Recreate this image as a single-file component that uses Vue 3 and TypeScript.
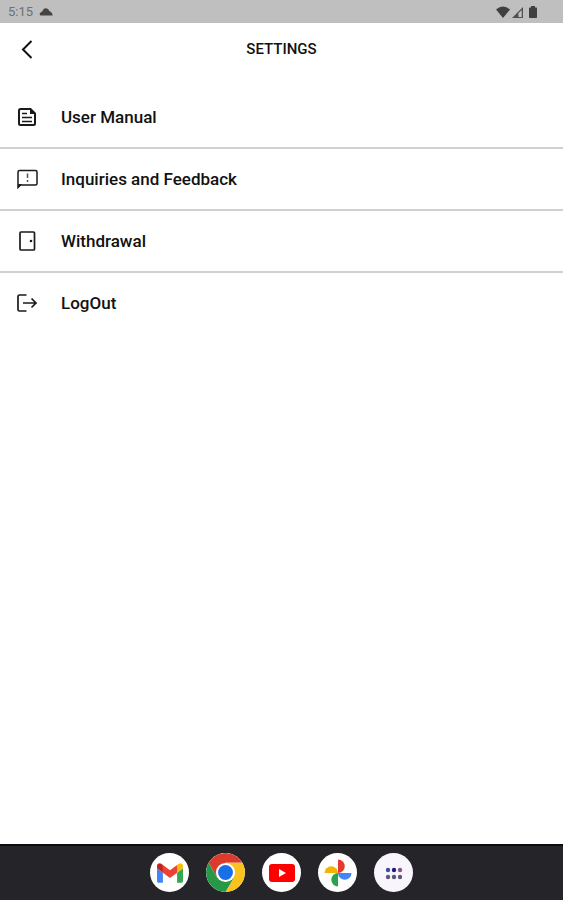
<script setup lang="ts">
interface MenuItem {
  id: string
  label: string
}

const items: MenuItem[] = [
  { id: 'manual', label: 'User Manual' },
  { id: 'feedback', label: 'Inquiries and Feedback' },
  { id: 'withdrawal', label: 'Withdrawal' },
  { id: 'logout', label: 'LogOut' },
]

const dots = [
  { x: 13, y: 16, color: '#3f4f9a' },
  { x: 19, y: 16, color: '#1c1c8c' },
  { x: 25, y: 16, color: '#8c5580' },
  { x: 13, y: 23, color: '#5f5878' },
  { x: 19, y: 23, color: '#5a5578' },
  { x: 25, y: 23, color: '#5f5878' },
]
</script>

<template>
  <div class="screen">
    <div class="status">
      <span class="time">5:15</span>
      <svg class="cloud" viewBox="0 0 14 8" width="14" height="8" aria-hidden="true">
        <path d="M1.500 7.500Q.2 7 .8 5.500 1.500 4 3.200 3.500C4.200 1.200 5.300.3 6.800.3c1.600 0 2.700 1 3.500 2.700C12.200 3.800 13.600 5.200 13.600 7.500z" fill="#444" />
      </svg>
      <svg class="signals" viewBox="0 0 44 14" width="44" height="14" aria-hidden="true">
        <path d="M0 4.500Q7-1.500 14 4.500L7 13z" fill="#404040" />
        <path d="M16 13 27 2v11z" fill="#505050" />
        <path d="M22.500 12V8.200L25.700 5v7z" fill="#c4c4c4" />
        <path d="M35 1h4v1.500h1.500q.5 0 .5.700v9q0 .8-.8.800h-6.400q-.8 0-.8-.8v-9q0-.7.500-.7H35z" fill="#404040" />
      </svg>
    </div>

    <header class="header">
      <button class="back" type="button" aria-label="Back">
        <svg viewBox="0 0 24 24" width="24" height="24">
          <path d="M16.500 4 8 12.500l8.500 8.500" fill="none" stroke="#111" stroke-width="2" />
        </svg>
      </button>
      <h1 class="title">SETTINGS</h1>
    </header>

    <main class="menu">
      <button v-for="item in items" :key="item.id" class="row" type="button">
        <svg class="icon" viewBox="0 0 24 24" width="24" height="24" fill="none" stroke="#1a1a1a" aria-hidden="true">
          <g v-if="item.id === 'manual'" stroke-width="2">
            <path d="M5.500 4h10L20 8.500v10q0 1.500-1.500 1.500h-13Q4 20 4 18.500v-13Q4 4 5.500 4z" />
            <path d="M15 4v5h5z" fill="#1a1a1a" stroke="none" />
            <path d="M7 8.500h5M7 12.500h10M7 16.500h10" stroke-width="1.500" />
          </g>
          <g v-else-if="item.id === 'feedback'" stroke-width="1.500">
            <path d="M3 20.500V5q0-1.500 1.500-1.500h16Q22 3.500 22 5v11.500q0 1.500-1.500 1.500h-15z" />
            <path d="M3 21v-4h4z" fill="#1a1a1a" stroke="none" />
            <path d="M12.500 6.500v4.500M12.500 13v2" stroke="#555" />
          </g>
          <g v-else-if="item.id === 'withdrawal'" stroke-width="1.700">
            <rect x="5" y="3" width="14.500" height="18" rx="1" />
            <circle cx="16" cy="12" r="1.300" fill="#1a1a1a" stroke="none" />
          </g>
          <g v-else stroke-width="1.700">
            <path d="M11.500 4H4.500Q3 4 3 5.500v13Q3 20 4.500 20h7" />
            <path d="M8 12h13M16.500 7.500 21 12l-4.500 4.500" />
          </g>
        </svg>
        <span class="label">{{ item.label }}</span>
      </button>
    </main>

    <nav class="dock">
      <button class="app" type="button" aria-label="Gmail">
        <svg viewBox="52 42 88 66" width="26" height="20">
          <path fill="#4285f4" d="M58 108h14V74L52 59v43c0 3.320 2.690 6 6 6" />
          <path fill="#34a853" d="M120 108h14c3.320 0 6-2.690 6-6V59l-20 15" />
          <path fill="#fbbc04" d="M120 48v26l20-15v-8c0-7.420-8.470-11.650-14.400-7.200" />
          <path fill="#ea4335" d="M72 74V48l24 18 24-18v26L96 92" />
          <path fill="#c5221f" d="M52 51v8l20 15V48l-5.600-4.200c-5.940-4.450-14.400-.22-14.400 7.200" />
        </svg>
      </button>
      <button class="app" type="button" aria-label="Chrome">
        <svg viewBox="-20 -20 40 40" width="39" height="39">
          <path fill="#db3a2c" d="M-17.320-10A20 20 0 0 1 17.320-10H0L-8.660 5z" />
          <path fill="#fcc31e" d="M17.320-10A20 20 0 0 1 0 20L8.660 5 0-10z" />
          <path fill="#279847" d="M0 20A20 20 0 0 1-17.320-10L-8.660 5H8.660z" />
          <circle r="9.800" fill="#fff" />
          <circle r="7.600" fill="#1a6fe8" />
        </svg>
      </button>
      <button class="app" type="button" aria-label="YouTube">
        <svg viewBox="0 0 26 18" width="26" height="18">
          <rect width="26" height="18" rx="3" fill="#f00" />
          <path d="M10 5v8l7-4z" fill="#fff" />
        </svg>
      </button>
      <button class="app" type="button" aria-label="Photos">
        <svg viewBox="-14 -14 28 28" width="28" height="28">
          <path fill="#e33b2e" d="M0-13.500a6.750 6.750 0 0 1 0 13.500z" />
          <path fill="#4285f4" d="M13.500 0a6.750 6.750 0 0 1-13.500 0z" />
          <path fill="#2ba24c" d="M0 13.500a6.750 6.750 0 0 1 0-13.500z" />
          <path fill="#f4b400" d="M-13.500 0a6.750 6.750 0 0 1 13.500 0z" />
        </svg>
      </button>
      <button class="app apps" type="button" aria-label="All apps">
        <svg viewBox="0 0 38 38" width="38" height="38">
          <circle v-for="dot in dots" :key="`${dot.x}-${dot.y}`" :cx="dot.x" :cy="dot.y" r="2.200" :fill="dot.color" />
        </svg>
      </button>
    </nav>
  </div>
</template>

<style>
body {
  margin: 0;
  background: #fff;
}
</style>

<style scoped>
.screen {
  display: flex;
  flex-direction: column;
  min-height: 100vh;
  background: #fff;
  color: #111;
  font-family: Roboto, "Liberation Sans", sans-serif;
}

button {
  margin: 0;
  padding: 0;
  border: 0;
  background: none;
  color: inherit;
  font: inherit;
  cursor: pointer;
}

svg {
  display: block;
}

.status {
  display: flex;
  align-items: center;
  height: 23px;
  padding: 0 23px 0 8px;
  background: #bfbfbf;
}

.time {
  margin-right: 6px;
  color: #707070;
  font-size: 13px;
  line-height: 23px;
}

.signals {
  margin-left: auto;
}

.header {
  display: grid;
  grid-template-columns: 24px 1fr 24px;
  align-items: center;
  height: 52px;
  padding: 0 15px;
  margin-bottom: 12px;
}

.title {
  margin: 0;
  font-size: 15px;
  font-weight: 500;
  line-height: 20px;
  text-align: center;
}

.menu {
  display: flex;
  flex: 1;
  flex-direction: column;
}

.row {
  display: flex;
  align-items: center;
  gap: 22px;
  height: 62px;
  padding: 0 15px;
  border-bottom: 2px solid #d0d0d0;
  text-align: left;
}

.row:last-child {
  border-bottom-color: transparent;
}

.label {
  font-size: 17px;
  font-weight: 500;
  line-height: 24px;
}

.dock {
  display: flex;
  align-items: center;
  justify-content: center;
  gap: 17px;
  height: 53px;
  padding-bottom: 1px;
  border-top: 2px solid #0c0c0e;
  background: #252529;
}

.app {
  display: flex;
  align-items: center;
  justify-content: center;
  width: 39px;
  height: 39px;
  border-radius: 50%;
  background: #fff;
  overflow: hidden;
}

.apps {
  background: #f8f5fc;
}
</style>
